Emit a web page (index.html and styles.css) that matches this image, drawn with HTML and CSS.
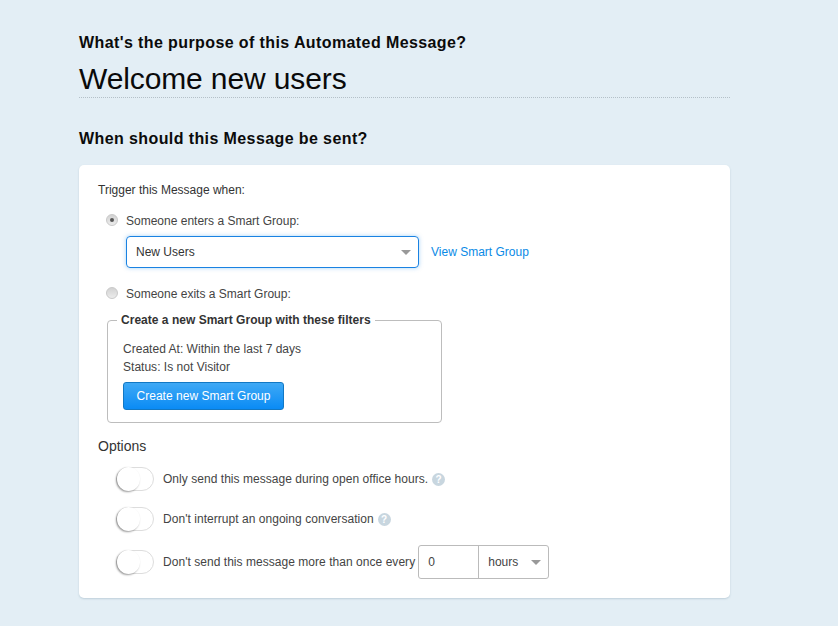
FILE: index.html
```html
<!DOCTYPE html>
<html lang="en">
<head>
<meta charset="utf-8">
<title>Automated Message</title>
<link rel="stylesheet" href="styles.css">
</head>
<body>
<main class="page">
  <h2 class="heading purpose-q">What's the purpose of this Automated Message?</h2>
  <div class="purpose-value">Welcome new users</div>
  <h2 class="heading when-q">When should this Message be sent?</h2>
  <section class="card">
    <div class="trigger-label">Trigger this Message when:</div>
    <div class="radio-row row-enter"><span class="radio checked"></span><span>Someone enters a Smart Group:</span></div>
    <div class="select-row">
      <div class="select focus"><span>New Users</span><span class="caret"></span></div>
      <a class="link" href="#">View Smart Group</a>
    </div>
    <div class="radio-row row-exit"><span class="radio"></span><span>Someone exits a Smart Group:</span></div>
    <fieldset class="filters">
      <legend>Create a new Smart Group with these filters</legend>
      <div class="filter-line">Created At: Within the last 7 days</div>
      <div class="filter-line">Status: Is not Visitor</div>
      <button class="btn" type="button">Create new Smart Group</button>
    </fieldset>
    <div class="options-title">Options</div>
    <div class="option opt1"><span class="toggle"></span><span>Only send this message during open office hours.</span><span class="help">?</span></div>
    <div class="option opt2"><span class="toggle"></span><span>Don't interrupt an ongoing conversation</span><span class="help">?</span></div>
    <div class="option opt3"><span class="toggle"></span><span>Don't send this message more than once every</span>
      <div class="combo"><span class="combo-num">0</span><span class="combo-unit">hours<span class="caret small"></span></span></div>
    </div>
  </section>
</main>
</body>
</html>
```
FILE: styles.css
```css
* { box-sizing: border-box; }
html, body { margin: 0; padding: 0; }
body {
  background: #e3eef5;
  font-family: "Liberation Sans", Arial, sans-serif;
  color: #333;
  font-size: 12px;
  height: 626px;
  overflow: hidden;
}
.page { width: 651px; margin-left: 79px; padding-top: 34px; }
.heading { margin: 0; font-size: 16px; font-weight: bold; color: #0b0b0b; line-height: 18px; letter-spacing: .4px; }
.purpose-value {
  margin-top: 8px;
  font-size: 30px;
  line-height: 37px;
  letter-spacing: -.12px;
  color: #0a0a0a;
  border-bottom: 1px dotted #b4c0c8;
  height: 38px;
}
.when-q { margin-top: 32px; }
.card {
  margin-top: 17px;
  background: #fff;
  border-radius: 5px;
  box-shadow: 0 1px 2px rgba(120,150,170,.35);
  padding: 18px 19px 0;
  height: 433px;
}
.trigger-label { line-height: 14px; }
.radio-row { display: flex; align-items: center; gap: 8px; margin-left: 8px; line-height: 14px; color: #444; }
.row-enter { margin-top: 17px; }
.row-exit { margin-top: 19px; }
.radio {
  width: 12px; height: 12px; border-radius: 50%;
  background: linear-gradient(#d2d2d2, #ececec);
  border: 1px solid #c9c9c9;
  position: relative;
  top: -1px;
}
.radio.checked::after {
  content: ""; position: absolute; left: 3px; top: 3px;
  width: 4px; height: 4px; border-radius: 50%; background: #555;
}
.select-row { display: flex; align-items: center; gap: 12px; margin: 8px 0 0 28px; }
.select {
  width: 293px; height: 32px; border: 1px solid #1a82e2; border-radius: 4px;
  box-shadow: 0 0 4px rgba(80,170,240,.5);
  padding: 0 9px; display: flex; align-items: center; justify-content: space-between;
  color: #333;
}
.caret {
  width: 0; height: 0; border-left: 5px solid transparent; border-right: 5px solid transparent;
  border-top: 5px solid #999; margin-right: -2px;
}
.link { color: #0a8ae6; text-decoration: none; }
.filters {
  margin: 12px 0 0 9px; width: 335px; height: 110px; padding: 13px 15px 0;
  border: 1px solid #bdbdbd; border-radius: 4px; min-width: 0;
}
.filters legend { font-weight: bold; color: #333; padding: 0 4px; margin-left: -6px; line-height: 14px; letter-spacing: .02px; }
.filter-line { line-height: 18px; color: #444; letter-spacing: .02px; }
.btn {
  display: block; margin-top: 6px; width: 161px; height: 28px; padding: 0;
  font: 12px "Liberation Sans", Arial, sans-serif; color: #fff; letter-spacing: .03px;
  background: linear-gradient(#3fa9f5, #0a8bf5);
  border: 1px solid #1278c4; border-radius: 3px;
}
.options-title { margin-top: 14px; font-size: 14px; line-height: 18px; color: #333; }
.option { display: flex; align-items: center; margin-left: 18px; line-height: 14px; color: #444; letter-spacing: .04px; }
.opt1 { margin-top: 12px; }
.opt2 { margin-top: 16px; }
.opt3 { margin-top: 14px; }
.toggle {
  width: 38px; height: 24px; border: 1px solid #ddd; border-radius: 12px;
  margin-right: 9px; position: relative; background: #fff; flex: none;
}
.toggle::after {
  content: ""; position: absolute; left: 0; top: -1px; width: 23px; height: 24px; border-radius: 50%;
  background: #fff; box-shadow: -1px 1px 2px rgba(0,0,0,.4);
}
.help {
  width: 13px; height: 13px; border-radius: 50%; background: #c8d6df; color: #fff;
  font-size: 10px; font-weight: bold; line-height: 13px; text-align: center; margin-left: 4px;
}
.combo {
  display: flex; height: 34px; width: 131px; margin-left: 3px;
  border: 1px solid #bbb; border-radius: 3px;
}
.combo-num { width: 60px; padding-left: 9px; line-height: 32px; border-right: 1px solid #bbb; }
.combo-unit { flex: 1; padding: 0 9px; display: flex; align-items: center; justify-content: space-between; }
```
